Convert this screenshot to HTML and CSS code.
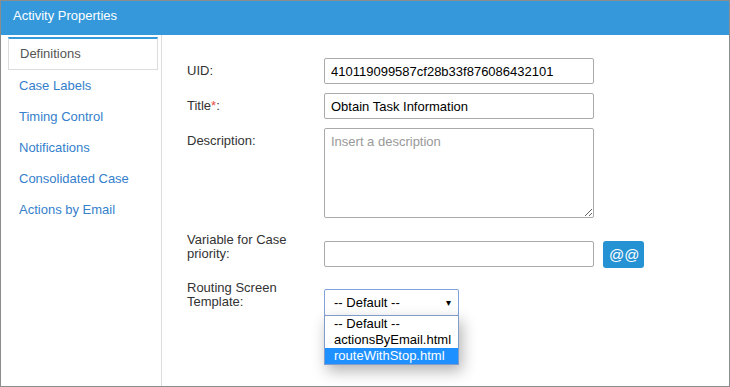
FILE: index.html
```html
<!DOCTYPE html>
<html lang="en">
<head>
  <meta charset="UTF-8">
  <meta name="viewport" content="width=device-width, initial-scale=1.0">
  <title>Activity Properties</title>
  <link rel="stylesheet" href="styles.css">
</head>
<body>
  <div class="panel">
    <div class="panel-header">Activity Properties</div>
    <div class="panel-body">
      <ul class="side-nav">
        <li class="nav-item active">Definitions</li>
        <li class="nav-item"><a href="#">Case Labels</a></li>
        <li class="nav-item"><a href="#">Timing Control</a></li>
        <li class="nav-item"><a href="#">Notifications</a></li>
        <li class="nav-item"><a href="#">Consolidated Case</a></li>
        <li class="nav-item"><a href="#">Actions by Email</a></li>
      </ul>

      <form class="form">
        <div class="row">
          <label class="label">UID:</label>
          <input class="field" type="text" value="410119099587cf28b33f876086432101">
        </div>
        <div class="row">
          <label class="label">Title<span class="req">*</span>:</label>
          <input class="field" type="text" value="Obtain Task Information">
        </div>
        <div class="row">
          <label class="label">Description:</label>
          <textarea class="field area" placeholder="Insert a description"></textarea>
        </div>
        <div class="row tall">
          <label class="label two-line">Variable for Case priority:</label>
          <input class="field" type="text" value="">
          <button type="button" class="at-button">@@</button>
        </div>
        <div class="row tall last">
          <label class="label two-line">Routing Screen Template:</label>
          <div class="select-wrap">
            <div class="select">
              <span>-- Default --</span>
              <span class="caret">&#9662;</span>
            </div>
            <ul class="options">
              <li>-- Default --</li>
              <li>actionsByEmail.html</li>
              <li class="selected">routeWithStop.html</li>
            </ul>
          </div>
        </div>
      </form>
    </div>
  </div>
</body>
</html>
```

FILE: styles.css
```css
* { box-sizing: border-box; }
body {
  margin: 0;
  font-family: 'Liberation Sans', Arial, sans-serif;
  font-size: 13px;
  color: #333;
  background: #fff;
}
.panel {
  width: 730px;
  height: 387px;
  border: 1px solid #8c8c8c;
  display: flex;
  flex-direction: column;
}
.panel-header {
  height: 34px;
  padding: 7px 12px 0;
  line-height: 15px;
  background-color: #3498db;
  color: #fff;
}
.panel-body {
  flex: 1;
  display: flex;
}
.side-nav {
  width: 161px;
  margin: 0;
  padding: 2px 3px 0 7px;
  list-style: none;
  border-right: 1px solid #dcdcdc;
}
.nav-item {
  padding: 8px 0 8px 11px;
  line-height: 15px;
}
.nav-item a {
  color: #3580cc;
  text-decoration: none;
}
.nav-item.active {
  padding: 7px 0 8px 11px;
  border: 1px solid #dcdcdc;
  border-top: 2px solid #3498db;
  color: #555;
}
.form {
  flex: 1;
  padding: 23px 0 0 25px;
}
.row {
  display: flex;
  align-items: flex-start;
  margin-bottom: 9px;
}
/* margins collapse with the 9px above, so these are the full gaps */
.row.tall { margin-top: 23px; }
.row.last { margin-top: 21px; }
.label {
  width: 137px;
  padding-top: 5px;
  line-height: 15px;
}
.label.two-line {
  padding: 0 10px 0 0;
  margin-top: -8px;
  line-height: 13.5px;
}
.req { color: #e74c3c; }
.field {
  width: 270px;
  height: 26px;
  padding: 0 6px;
  border: 1px solid #aaa;
  border-radius: 2px;
  font-family: inherit;
  font-size: 13px;
  color: #000;
}
.field.area {
  height: 90px;
  padding: 5px 6px;
  resize: vertical;
}
.field::placeholder { color: #999; }
.at-button {
  width: 41px;
  height: 27px;
  margin-left: 9px;
  border: none;
  border-radius: 3px;
  background-color: #2592d3;
  color: #fff;
  font-family: inherit;
  font-size: 15px;
  cursor: pointer;
}
.select-wrap { position: relative; }
.select {
  display: flex;
  justify-content: space-between;
  align-items: center;
  width: 135px;
  height: 27px;
  padding: 0 7px 0 9px;
  border: 1px solid #7fa3d9;
  border-radius: 2px;
  color: #000;
}
.caret { font-size: 10px; }
.options {
  position: absolute;
  top: 26px;
  left: 0;
  width: 135px;
  margin: 0;
  padding: 0;
  list-style: none;
  background: #fff;
  border: 1px solid #7f9ccc;
  box-shadow: 3px 6px 14px rgba(0, 0, 0, 0.3);
  color: #000;
}
.options li {
  height: 16px;
  padding-left: 9px;
  line-height: 16px;
}
.options li.selected {
  background-color: #1e90ff;
  color: #fff;
}
```
